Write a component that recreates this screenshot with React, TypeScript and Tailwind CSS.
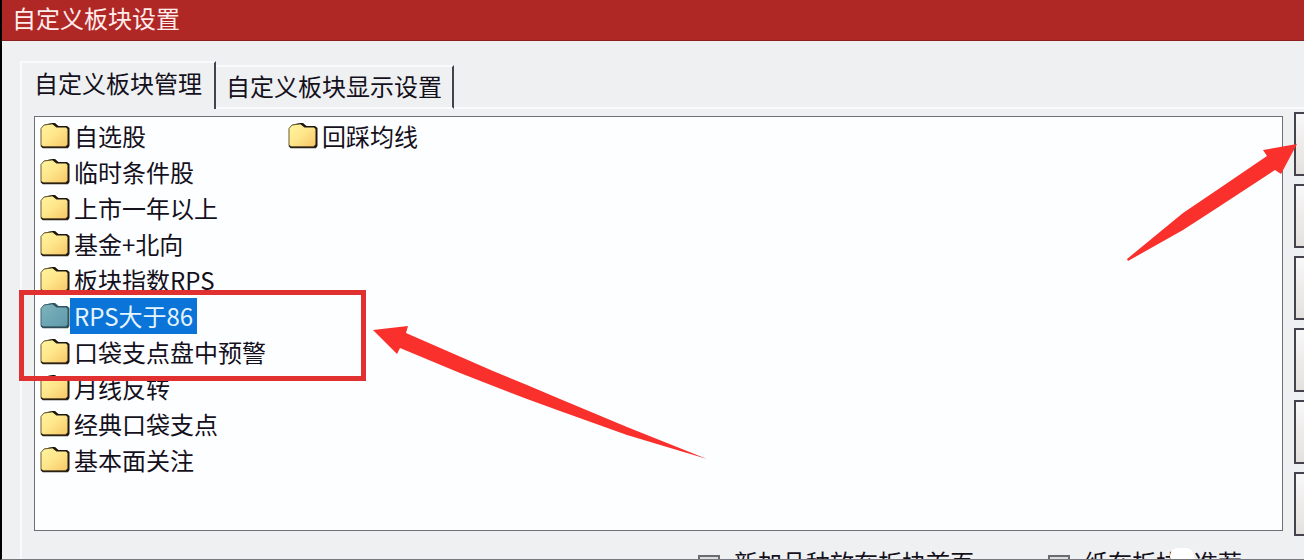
import { useId, useState } from 'react';
import clsx from 'clsx';

type Block = { id: string; name: string };

const columns: Block[][] = [
  [
    { id: 'zxg', name: '自选股' },
    { id: 'lstj', name: '临时条件股' },
    { id: 'ssyn', name: '上市一年以上' },
    { id: 'jjbx', name: '基金+北向' },
    { id: 'bkrps', name: '板块指数RPS' },
    { id: 'rps86', name: 'RPS大于86' },
    { id: 'kdyj', name: '口袋支点盘中预警' },
    { id: 'yxfz', name: '月线反转' },
    { id: 'jdkd', name: '经典口袋支点' },
    { id: 'jbm', name: '基本面关注' },
  ],
  [{ id: 'hcjx', name: '回踩均线' }],
];

const actions = ['新建板块', '删除板块', '修改名称', '板块上移', '板块下移', '清空板块'];

function FolderIcon({ selected }: { selected: boolean }) {
  const id = useId();
  return (
    <svg viewBox="0 0 30 28" className="h-7 w-[30px] shrink-0" aria-hidden="true">
      <defs>
        <linearGradient id={id} x1="0" y1="0" x2="1" y2="1">
          <stop offset="0" stopColor={selected ? '#7fb4bb' : '#fff6a0'} />
          <stop offset="0.5" stopColor={selected ? '#6fa6b4' : '#fee58a'} />
          <stop offset="1" stopColor={selected ? '#5f9aaa' : '#f6c766'} />
        </linearGradient>
      </defs>
      <path d="M2 24.5V6L5 2.5 12 1 15 1 18.5 4H27L29.5 6V24L27.5 26H3Z" fill={selected ? '#2d5560' : '#1d1712'} />
      <path d="M1 23.5V6.5L4 3 12 2 16.5 5.5H26L27.5 7V22.5L25.5 24.5H2Z" fill={`url(#${id})`} />
      <path d="M1 23.5V6.5L4 3 12 2" fill="none" stroke={selected ? '#3c666f' : '#6b5a2c'} strokeWidth="1" />
      <path d="M1 23.5 3 25.5H27.5L28.5 24" fill="none" stroke={selected ? '#2d4a55' : '#2b2014'} strokeWidth="1.5" />
    </svg>
  );
}

function Annotations() {
  return (
    <>
      <div className="pointer-events-none absolute left-[17px] top-[290px] h-[91px] w-[347px] border-[5px] border-[#e03030]" />
      <svg className="pointer-events-none absolute -left-0.5 top-0 h-[560px] w-[1304px]" viewBox="0 0 1304 560" aria-hidden="true">
        <path
          d="M373 330 408 326 406 333 493 371 527 385 560 399 627 427 707 459 627 435 560 411 527 399 460 373 400 348 397 354Z"
          fill="#f9302b"
        />
        <path
          d="M1297 144 1263 150 1267 156 1217 190 1183 213 1127 259 1128 261 1183 230 1217 208 1275 170 1281 174Z"
          fill="#f9302b"
        />
      </svg>
    </>
  );
}

export default function App() {
  const [tab, setTab] = useState(0);
  const [selected, setSelected] = useState('rps86');

  return (
    <div className="relative flex h-screen flex-col overflow-hidden border-b border-l-2 border-b-[#77777d] border-l-black bg-[#eff0f2] font-['Noto_Sans_CJK_SC',sans-serif] text-2xl text-[#14101c]">
      <header className="flex h-[41px] shrink-0 items-center border-b border-[#8a2020] bg-[#b02826] px-[10px] pb-1">
        <h1 className="leading-6 text-[#ffeceb]">自定义板块设置</h1>
      </header>

      <div className="flex min-h-0 flex-1 flex-col pl-[18px] pt-5">
        <div role="tablist" className="flex h-12 shrink-0 items-end">
          <button
            type="button"
            role="tab"
            aria-selected={tab === 0}
            onClick={() => setTab(0)}
            className="h-12 border-l-2 border-r-2 border-t-2 border-l-[#fafafc] border-r-[#44434d] border-t-[#fafafc] px-3 pb-1.5 leading-6"
          >
            自定义板块管理
          </button>
          <button
            type="button"
            role="tab"
            aria-selected={tab === 1}
            onClick={() => setTab(1)}
            className="h-11 border-b-2 border-r-2 border-t-2 border-b-[#fafafc] border-r-[#44434d] border-t-[#fafafc] px-[10px] pb-0.5 leading-6"
          >
            自定义板块显示设置
          </button>
          <div className="flex-1 self-end border-b-2 border-[#fafafc]" />
        </div>

        <div className="flex min-h-0 flex-1 flex-col border-l-2 border-[#fafafc] pl-3 pt-[7px]">
          <div className="flex shrink-0">
            <div className="flex h-[415px] flex-1 border border-[#6e6e76] bg-[#fdfeff] pl-[5px] pt-px">
              {columns.map((blocks, i) => (
                <ul key={i} className="w-[248px]" role="listbox" aria-label="板块列表">
                  {blocks.map((block) => {
                    const active = block.id === selected;
                    return (
                      <li
                        key={block.id}
                        role="option"
                        aria-selected={active}
                        onClick={() => setSelected(block.id)}
                        className="flex h-9 cursor-default items-center"
                      >
                        <FolderIcon selected={active} />
                        <span className={clsx('whitespace-nowrap px-1 leading-9', active && 'bg-[#0a74d8] text-[#e6f4ff]')}>
                          {block.name}
                        </span>
                      </li>
                    );
                  })}
                </ul>
              ))}
            </div>
            <div className="-mt-1 ml-[11px] flex w-[10px] flex-col gap-2 overflow-hidden">
              {actions.map((name) => (
                <button
                  key={name}
                  type="button"
                  aria-label={name}
                  className="h-16 w-40 shrink-0 border-2 border-[#44434d] bg-linear-to-b from-[#f8f8f8] to-[#e4e0de]"
                />
              ))}
            </div>
          </div>

          <div className="flex shrink-0 pl-[664px] pt-2">
            <label className="flex w-[350px] items-start gap-[14px] whitespace-nowrap leading-9">
              <input type="checkbox" className="mt-[11px] size-[22px] appearance-none border-2 border-[#6a6a70] bg-[#dcdcdc]" />
              新加品种放在板块首页
            </label>
            <label className="relative flex items-start gap-[14px] whitespace-nowrap leading-9">
              <input type="checkbox" className="mt-[11px] size-[22px] appearance-none border-2 border-[#6a6a70] bg-[#dcdcdc]" />
              <span>纸在板块</span>
              <span>准荐</span>
              <span className="absolute left-[122px] top-1 h-4 w-6 rounded-full bg-white" />
            </label>
          </div>
        </div>
      </div>

      <Annotations />
    </div>
  );
}
